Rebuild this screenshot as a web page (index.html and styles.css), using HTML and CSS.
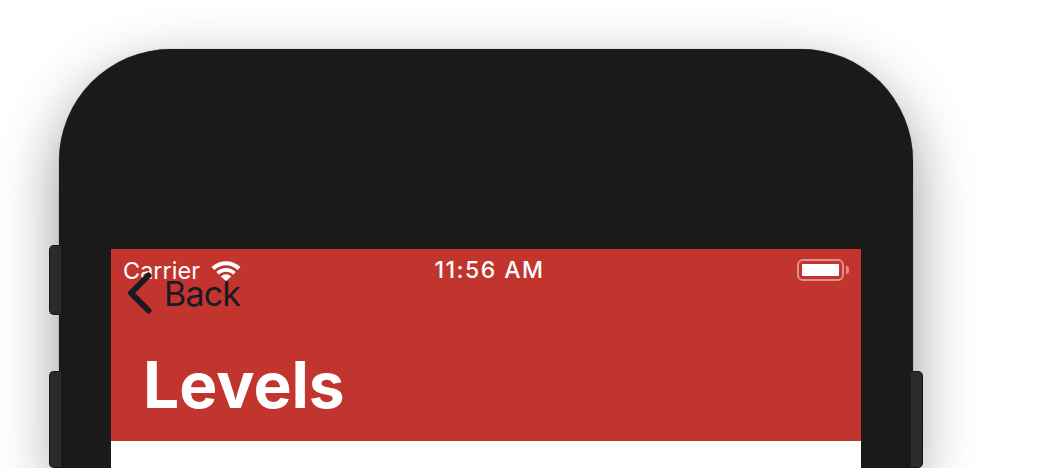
FILE: index.html
```html
<!DOCTYPE html>
<html lang="en">

<head>
    <meta charset="UTF-8">
    <title>Levels</title>
    <link rel="stylesheet" href="styles.css">
</head>

<body>
    <div class="device">
        <div class="side-button volume-up"></div>
        <div class="side-button volume-down"></div>
        <div class="side-button power"></div>

        <div class="screen">
            <header class="nav">
                <div class="status-bar">
                    <div class="status-left">
                        <span class="carrier">Carrier</span>
                        <svg class="wifi" width="30" height="22" viewBox="0 0 30 22">
                            <path d="M.5 8C8.500 .2 21.500 .2 29.500 8L26.600 11C20 4.700 10 4.700 3.400 11Z" fill="#fff" />
                            <path d="M5.300 12.900C10.800 7.600 19.200 7.600 24.700 12.900L22 15.700C18 11.900 12 11.900 8 15.700Z" fill="#fff" />
                            <path d="M9.800 17.500C12.900 14.600 17.100 14.600 20.200 17.500L15 22Z" fill="#fff" />
                        </svg>
                    </div>
                    <span class="clock">11:56 AM</span>
                    <div class="status-right">
                        <div class="battery">
                            <div class="battery-level"></div>
                        </div>
                        <div class="battery-cap"></div>
                    </div>
                </div>

                <button class="back">
                    <svg class="chevron" width="28" height="42" viewBox="0 0 28 42">
                        <path d="M23.500 3.500L6 21L23.500 38.500" fill="none" stroke="#1a1a24" stroke-width="6" stroke-linecap="round" stroke-linejoin="round" />
                    </svg>
                    <span>Back</span>
                </button>

                <h1>Levels</h1>
            </header>
            <main class="content"></main>
        </div>
    </div>
</body>

</html>
```

FILE: styles.css
```css
* {
    box-sizing: border-box;
}

html,
body {
    height: 100%;
}

body {
    margin: 0;
    overflow: hidden;
    background: #fff;
    font-family: Inter, "Liberation Sans", sans-serif;
}

.device {
    position: relative;
    width: 854px;
    height: 419px;
    margin: 49px 0 0 59px;
    padding: 200px 52px 0;
    border-radius: 112px 112px 0 0;
    background: #1a1a1a;
    box-shadow: 0 0 1px rgba(0, 0, 0, 0.6), 0 22px 60px rgba(0, 0, 0, 0.42);
}

.side-button {
    position: absolute;
    width: 12px;
    background: #2b2b2b;
    border: 1px solid #161616;
}

.volume-up,
.volume-down {
    left: -10px;
    border-right: none;
    border-radius: 5px 0 0 5px;
}

.volume-up {
    top: 196px;
    height: 70px;
}

.volume-down {
    top: 322px;
    height: 97px;
}

.power {
    right: -10px;
    top: 322px;
    height: 97px;
    border-left: none;
    border-radius: 0 5px 5px 0;
}

.screen {
    width: 750px;
    height: 219px;
    background: #fff;
}

.nav {
    height: 192px;
    background: #c2352e;
    color: #fff;
}

.status-bar {
    display: grid;
    grid-template-columns: 1fr auto 1fr;
    align-items: center;
    height: 42px;
    padding: 0 12px;
}

.status-left {
    display: flex;
    align-items: center;
    gap: 11px;
}

.carrier {
    font-size: 23.500px;
}

.clock {
    margin-left: 7px;
    font-size: 23px;
    font-weight: 500;
    letter-spacing: 1.500px;
}

.status-right {
    display: flex;
    align-items: center;
    justify-content: flex-end;
    gap: 2px;
}

.battery {
    width: 47px;
    height: 22px;
    padding: 3px;
    border: 2px solid rgba(255, 255, 255, 0.45);
    border-radius: 6px;
}

.battery-level {
    width: 100%;
    height: 100%;
    background: #fff;
    border-radius: 1px;
}

.battery-cap {
    width: 3px;
    height: 8px;
    background: rgba(255, 255, 255, 0.45);
    border-radius: 0 3px 3px 0;
}

.back {
    display: flex;
    align-items: center;
    gap: 11px;
    margin: -19px 0 0 14px;
    padding: 0;
    border: none;
    background: none;
    color: #1a1a24;
    font-family: inherit;
    font-size: 34px;
    letter-spacing: -0.8px;
    cursor: pointer;
}

.chevron {
    display: block;
}

h1 {
    margin: 33px 0 0 32px;
    font-size: 64px;
    font-weight: 700;
    line-height: 1.2;
}
```
